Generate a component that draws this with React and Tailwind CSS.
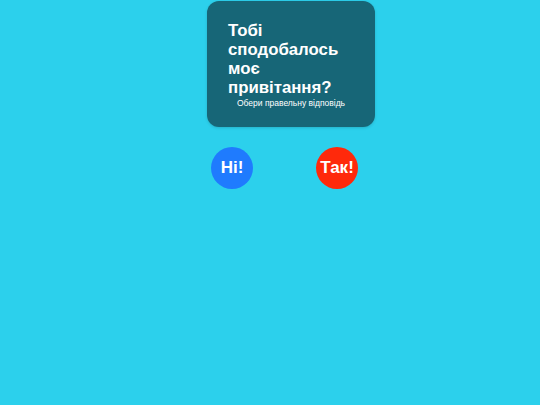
export default function App() {
  return (
    <div
      className="w-[540px] h-[405px] bg-[#2cd0ec] flex flex-col items-start pl-[207px]"
      style={{ fontFamily: '"Liberation Sans", Arial, sans-serif' }}
    >
      <div className="w-[168px] h-[126px] mt-[1px] rounded-[12px] bg-[#176677] flex flex-col pt-[20px] px-[21px] shadow-[0_1px_3px_rgba(0,0,0,0.15)]">
        <div className="text-white font-bold text-[16.8px] leading-[19px]">
          Тобі
          <br />
          сподобалось
          <br />
          моє
          <br />
          привітання?
        </div>
        <div className="text-white text-[8.5px] leading-[10px] mt-[1px] text-center ml-[-21px] mr-[-21px]">
          Обери правельну відповідь
        </div>
      </div>
      <div className="flex mt-[20px] ml-[4px] gap-[63px]">
        <div className="w-[42px] h-[42px] rounded-full bg-[#1f7bfe] flex items-center justify-center text-white font-bold text-[17px]">
          Ні!
        </div>
        <div className="w-[42px] h-[42px] rounded-full bg-[#ff290b] flex items-center justify-center text-white font-bold text-[17px]">
          Так!
        </div>
      </div>
    </div>
  );
}
